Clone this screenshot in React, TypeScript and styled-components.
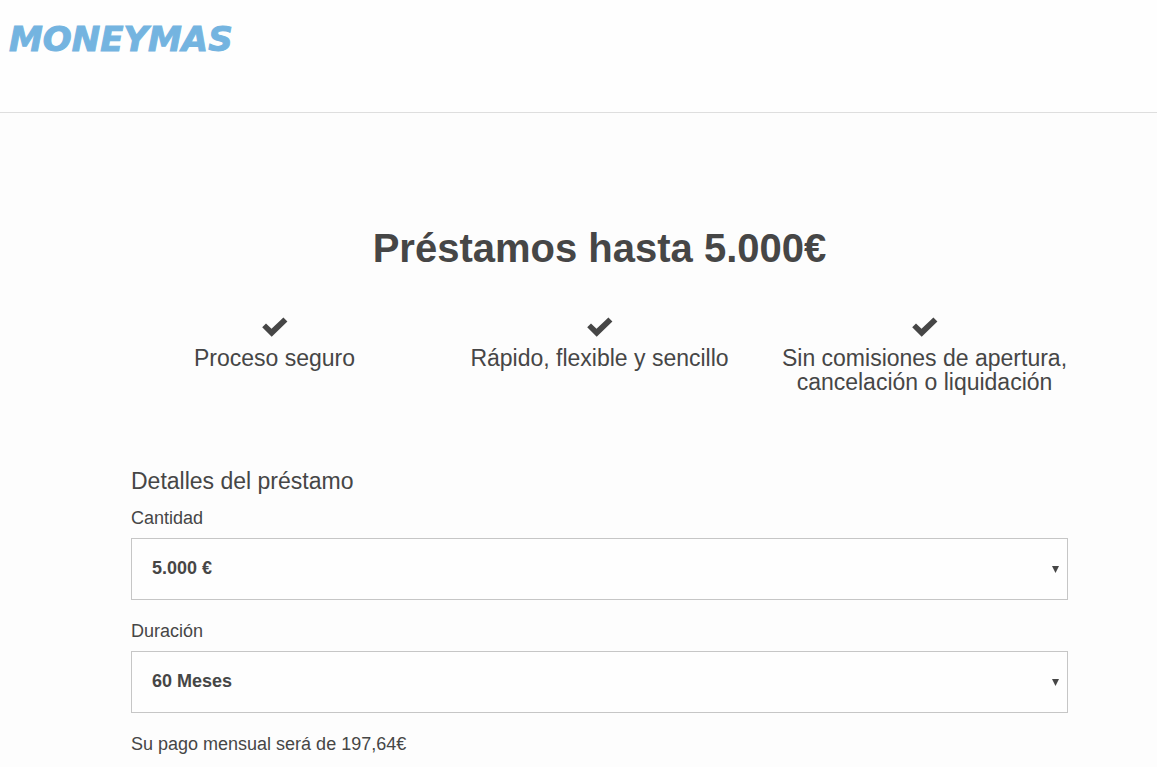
import React from "react";
import styled, { createGlobalStyle } from "styled-components";

const GlobalStyle = createGlobalStyle`
  * { box-sizing: border-box; }
  body {
    margin: 0;
    background: #fdfdfd;
    color: #464646;
    font-family: "Liberation Sans", Arial, sans-serif;
    font-size: 18px;
    line-height: 24px;
  }
`;

const Header = styled.header`
  height: 113px;
  padding: 19px 9px;
  background: #fefefe;
  border-bottom: 1px solid #dedede;
`;

const Logo = styled.a`
  color: #74b4e0;
  font: italic bold 34px/40px "DejaVu Sans", sans-serif;
  text-decoration: none;
  -webkit-text-stroke: 1px #74b4e0;
  stroke-linejoin: round;
`;

const Main = styled.main`
  padding: 111px 89px 12px 131px;
`;

const Title = styled.h1`
  margin: 0;
  font-size: 40px;
  line-height: 48px;
  text-align: center;
`;

const Benefits = styled.ul`
  display: grid;
  grid-template-columns: repeat(3, 1fr);
  margin: 45px -19px 0;
  padding: 0;
  list-style: none;
`;

const Benefit = styled.li`
  display: flex;
  flex-direction: column;
  align-items: center;
  padding: 0 16px;
  font-size: 23px;
  text-align: center;
`;

const CheckIcon = styled.svg`
  width: 26px;
  height: 20px;
  margin-bottom: 9px;
  fill: currentColor;
`;

const Form = styled.form`
  margin-top: 75px;
`;

const FormTitle = styled.h2`
  margin: 0 0 13px;
  font-size: 23px;
  font-weight: normal;
  line-height: 24px;
`;

const Field = styled.div`
  margin-bottom: 19px;
`;

const Label = styled.label`
  display: block;
  margin-bottom: 8px;
`;

const SelectBox = styled.div`
  position: relative;
`;

const Select = styled.select`
  display: block;
  width: 100%;
  height: 62px;
  padding: 0 32px 2px 20px;
  appearance: none;
  border: 1px solid #c6c6c6;
  border-radius: 0;
  background: #fefefe;
  color: #464646;
  font: bold 18px/24px "Liberation Sans", Arial, sans-serif;
`;

const Arrow = styled.svg`
  position: absolute;
  top: 28px;
  right: 9px;
  width: 7px;
  height: 7px;
  fill: #464646;
  pointer-events: none;
`;

const Payment = styled.p`
  margin: 0;
`;

const benefits = [
  "Proceso seguro",
  "Rápido, flexible y sencillo",
  "Sin comisiones de apertura, cancelación o liquidación",
];

function SelectField({ id, label, options }: { id: string; label: string; options: string[] }) {
  return (
    <Field>
      <Label htmlFor={id}>{label}</Label>
      <SelectBox>
        <Select id={id}>
          {options.map((option) => (
            <option key={option}>{option}</option>
          ))}
        </Select>
        <Arrow viewBox="0 0 7 7" aria-hidden="true">
          <path d="M0 0h7L3.5 7z" />
        </Arrow>
      </SelectBox>
    </Field>
  );
}

export default function App() {
  return (
    <>
      <GlobalStyle />
      <Header>
        <Logo href="#">MONEYMAS</Logo>
      </Header>
      <Main>
        <Title>Préstamos hasta 5.000€</Title>
        <Benefits>
          {benefits.map((text) => (
            <Benefit key={text}>
              <CheckIcon viewBox="0 0 26 20" aria-hidden="true">
                <path d="M0.2 10.3L4 6.4L9.5 11.8L21.4 0.4L25.4 4.4L9.7 19.8z" />
              </CheckIcon>
              <span>{text}</span>
            </Benefit>
          ))}
        </Benefits>
        <Form>
          <FormTitle>Detalles del préstamo</FormTitle>
          <SelectField id="cantidad" label="Cantidad" options={["5.000 €"]} />
          <SelectField id="duracion" label="Duración" options={["60 Meses"]} />
          <Payment>Su pago mensual será de 197,64€</Payment>
        </Form>
      </Main>
    </>
  );
}
